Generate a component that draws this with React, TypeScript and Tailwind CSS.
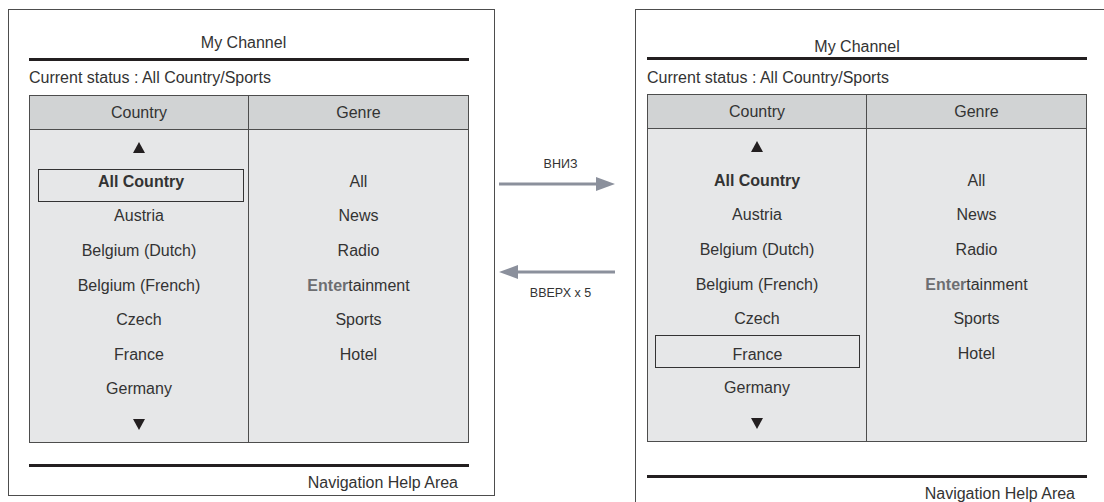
import React from 'react'

const countries = ['All Country', 'Austria', 'Belgium (Dutch)', 'Belgium (French)', 'Czech', 'France', 'Germany']
const genres = ['All', 'News', 'Radio', 'Entertainment', 'Sports', 'Hotel']

function Triangle({ down }: { down?: boolean }) {
  return (
    <svg width="12" height="11" viewBox="0 0 12 11">
      <polygon points={down ? '0,0 12,0 6,11' : '6,0 12,11 0,11'} fill="#231f20" />
    </svg>
  )
}

function Row({ children }: { children?: React.ReactNode }) {
  return <div className="h-[34.6px] flex items-center justify-center">{children}</div>
}

function GenreLabel({ name }: { name: string }) {
  if (name === 'Entertainment') {
    return (
      <span>
        <span className="font-bold text-[#6d6e71]">Enter</span>tainment
      </span>
    )
  }
  return <span>{name}</span>
}

function Panel({ right }: { right?: boolean }) {
  const selected = right ? 5 : 0
  return (
    <div
      className={
        right
          ? 'mt-[9px] w-[487px] h-[520px] shrink-0 border border-[#4d4d4d] pl-[11px] flex flex-col'
          : 'ml-[8px] mt-[9px] w-[487px] h-[487px] shrink-0 border border-[#4d4d4d] pl-[20px] flex flex-col'
      }
    >
      <div className="w-[440px] flex flex-col">
        <div
          className={
            right
              ? 'mt-[27px] h-[20px] leading-[20px] text-center pr-[20px]'
              : 'mt-[23px] h-[20px] leading-[20px] text-center pr-[11px]'
          }
        >
          My Channel
        </div>
        <div className={right ? 'h-[3px] bg-[#231f20]' : 'mt-[5px] h-[3px] bg-[#231f20]'} />
        <div className={right ? 'mt-[8px] h-[20px] leading-[20px]' : 'mt-[7px] h-[20px] leading-[20px]'}>
          Current status : All Country/Sports
        </div>

        <div className={right ? 'mt-[6px] border border-[#4d4d4d]' : 'mt-[7px] border border-[#4d4d4d]'}>
          <div className="grid grid-cols-2 h-[34px] bg-[#d1d3d4] border-b border-[#4d4d4d]">
            <div className="border-r border-[#4d4d4d] flex items-center justify-center">Country</div>
            <div className="flex items-center justify-center">Genre</div>
          </div>
          <div className="grid grid-cols-2 h-[312px] bg-[#e6e7e8]">
            <div className="border-r border-[#4d4d4d] flex flex-col">
              <Row>
                <Triangle />
              </Row>
              {countries.map((c, i) => {
                const bold = i === 0 ? 'font-bold' : ''
                if (i === selected) {
                  return (
                    <div key={c} className="h-[34.6px] flex items-center">
                      <div
                        className={
                          right
                            ? 'ml-[7px] mr-[6px] mb-[4px] flex-1 h-[33px] border border-[#333] flex items-center justify-center pt-[6px]'
                            : 'ml-[8px] mr-[4px] mt-[7px] flex-1 h-[33px] border border-[#333] flex items-center justify-center pb-[7px] font-bold'
                        }
                      >
                        {c}
                      </div>
                    </div>
                  )
                }
                return (
                  <Row key={c}>
                    <span className={bold}>{c}</span>
                  </Row>
                )
              })}
              <Row>
                <Triangle down />
              </Row>
            </div>
            <div className="flex flex-col">
              <Row />
              {genres.map((g) => (
                <Row key={g}>
                  <GenreLabel name={g} />
                </Row>
              ))}
            </div>
          </div>
        </div>

        <div className={right ? 'mt-[33px] h-[3px] bg-[#231f20]' : 'mt-[21px] h-[3px] bg-[#231f20]'} />
        <div
          className={
            right
              ? 'mt-[6px] h-[20px] leading-[20px] text-right pr-[12px]'
              : 'mt-[6px] h-[20px] leading-[20px] text-right pr-[11px]'
          }
        >
          Navigation Help Area
        </div>
      </div>
    </div>
  )
}

function Arrow({ left }: { left?: boolean }) {
  return (
    <svg width="116" height="14" viewBox="0 0 116 14">
      {left ? (
        <>
          <rect x="16" y="5.5" width="100" height="3" fill="#8b909c" />
          <polygon points="0,7 19,0 19,14" fill="#8b909c" />
        </>
      ) : (
        <>
          <rect x="0" y="5.5" width="100" height="3" fill="#8b909c" />
          <polygon points="116,7 97,0 97,14" fill="#8b909c" />
        </>
      )}
    </svg>
  )
}

export default function App() {
  return (
    <div className="w-[1104px] h-[502px] overflow-hidden bg-white flex items-start font-['Liberation_Sans',Arial,sans-serif] text-[16px] text-[#333]">
      <Panel />
      <div className="w-[140px] shrink-0 pl-[4px] pt-[156px] flex flex-col">
        <div className="w-[116px] pl-[7px] h-[16px] leading-[16px] text-center text-[12.5px]">ВНИЗ</div>
        <div className="mt-[5px] h-[14px] flex">
          <Arrow />
        </div>
        <div className="mt-[74px] h-[14px] flex">
          <Arrow left />
        </div>
        <div className="mt-[6px] w-[116px] pl-[7px] h-[16px] leading-[16px] text-center text-[12.5px]">ВВЕРХ x 5</div>
      </div>
      <Panel right />
    </div>
  )
}
